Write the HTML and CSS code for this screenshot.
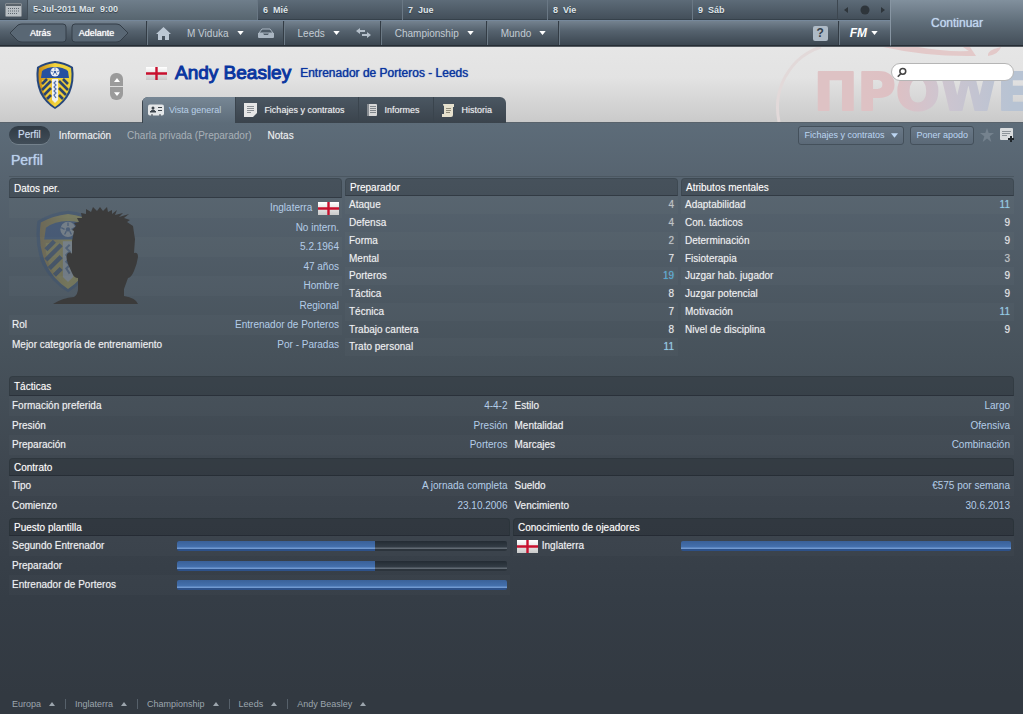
FILE: index.html
```html
<!DOCTYPE html>
<html lang="es">
<head>
    <meta charset="UTF-8">
    <title>Andy Beasley - Perfil</title>
    <link rel="stylesheet" href="styles.css">
</head>
<body>
<svg class="defs" width="0" height="0" aria-hidden="true">
    <defs>
        <linearGradient id="gold" x1="0" x2="1" y1="0" y2="0">
            <stop offset="0" stop-color="#c98a16"/>
            <stop offset="0.5" stop-color="#f3d43c"/>
            <stop offset="1" stop-color="#e8cf3a"/>
        </linearGradient>
        <linearGradient id="flag-shade" x1="0" x2="0" y1="0" y2="1">
            <stop offset="0" stop-color="#fff"/>
            <stop offset="1" stop-color="#c9c9c9"/>
        </linearGradient>
        <symbol id="crest" viewBox="0 0 40 50">
            <path d="M20 1 Q30 2 38 7 Q40 21 35 33 Q30 43 20 49 Q10 43 5 33 Q0 21 2 7 Q10 2 20 1Z" fill="#25467c"/>
            <path d="M20 3 Q29 4 36 8 Q38 21 33 32 Q29 41 20 47 Q11 41 7 32 Q2 21 4 8 Q11 4 20 3Z" fill="url(#gold)"/>
            <path d="M20 7 Q28 7 33 11 L34 18 H6 L7 11 Q12 7 20 7Z" fill="#2650a0"/>
            <path d="M7 20 L16 20 V42 Q6 33 7 20Z M33 20 L24 20 V42 Q34 33 33 20Z" fill="#f0ca38"/>
            <path d="M7 24 L12 19 M7 30 L16 21 M9 35 L16 28 M12 39 L16 35 M33 24 L28 19 M33 30 L24 21 M31 35 L24 28 M28 39 L24 35" stroke="#2b4470" stroke-width="2.6"/>
            <path d="M17 19 H23 V40 L20 43 L17 40Z" fill="#eef0f4"/>
            <path d="M21 21 L19 23 L21 25 L19 27 L21 29 L19 31 L21 33 L19 35 L21 38" fill="none" stroke="#5572ab" stroke-width="1.2"/>
            <circle cx="20" cy="12" r="4.500" fill="#eef0f4"/>
            <circle cx="20" cy="12" r="1.300" fill="#3c62a8"/>
            <path d="M20 8v2M16 11l2 1M24 11l-2 1M18 15l1-2M22 15l-1-2" stroke="#3c62a8" stroke-width="0.8"/>
        </symbol>
        <symbol id="flag" viewBox="0 0 21 13">
            <rect width="21" height="13" fill="url(#flag-shade)"/>
            <path d="M0 6.500H21M10.500 0V13" stroke="#c8102e" stroke-width="2.400"/>
        </symbol>
        <symbol id="caret" viewBox="0 0 8 5">
            <path d="M0 0H8L4 5Z" fill="currentColor"/>
        </symbol>
        <symbol id="caret-up" viewBox="0 0 6 4">
            <path d="M0 4H6L3 0Z" fill="currentColor"/>
        </symbol>
    </defs>
</svg>

<header class="topbar">
    <div class="dates">
        <button class="calendar" aria-label="Calendario">
            <svg width="17" height="14" viewBox="0 0 17 14">
                <rect x="0.500" y="0.500" width="16" height="13" rx="1" fill="#b9bfc4" stroke="#848b91"/>
                <rect x="1" y="1" width="15" height="2" fill="#5a636b"/>
                <path d="M3 5.500H15M3 8H15M3 10.500H13" stroke="#5c656d" stroke-dasharray="1 1"/>
            </svg>
        </button>
        <div class="day today">5-Jul-2011 Mar&nbsp; 9:00</div>
        <div class="day">6&nbsp; Mié</div>
        <div class="day">7&nbsp; Jue</div>
        <div class="day">8&nbsp; Vie</div>
        <div class="day">9&nbsp; Sáb</div>
        <div class="day-pager">
            <svg width="41" height="10" viewBox="0 0 41 10" fill="#2e353b">
                <path d="M0 5L4 2V8ZM41 5L37 2V8Z"/>
                <circle cx="21" cy="5" r="4.500"/>
            </svg>
        </div>
    </div>
    <nav class="menu">
        <div class="history">
            <button class="back">
                <svg width="58" height="20" viewBox="0 0 58 20"><path d="M1 10L9 2Q11 1 13 1H54Q57 1 57 4V16Q57 19 54 19H13Q11 19 9 18Z"/></svg>
                <span>Atrás</span>
            </button>
            <button class="forward">
                <svg width="58" height="20" viewBox="0 0 58 20"><path d="M57 10L49 2Q47 1 45 1H4Q1 1 1 4V16Q1 19 4 19H45Q47 19 49 18Z"/></svg>
                <span>Adelante</span>
            </button>
        </div>
        <div class="menu-group">
            <button aria-label="Inicio">
                <svg width="15" height="13" viewBox="0 0 15 13" fill="#bcc8d4"><path d="M7.500 0L15 7H13V13H9V9H6V13H2V7H0Z"/></svg>
            </button>
            <button class="menu-name">M Viduka <svg width="7" height="4"><use href="#caret"/></svg></button>
            <button aria-label="Bandeja">
                <svg width="16" height="10" viewBox="0 0 16 10"><path d="M4 1H12L15 5H1Z" fill="#4d5a66" stroke="#aab6c2"/><path d="M0 5H5L6 7H10L11 5H16V9Q16 10 15 10H1Q0 10 0 9Z" fill="#aab6c2"/></svg>
            </button>
        </div>
        <div class="menu-group">
            <button class="menu-club">Leeds <svg width="7" height="4"><use href="#caret"/></svg></button>
            <button aria-label="Cambiar">
                <svg width="15" height="10" viewBox="0 0 15 10" fill="#b4bfca"><path d="M0 3L4 0V2H9V4H4V6ZM15 7L11 4V6H6V8H11V10Z"/></svg>
            </button>
        </div>
        <div class="menu-group"><button>Championship <svg width="7" height="4"><use href="#caret"/></svg></button></div>
        <div class="menu-group"><button>Mundo <svg width="7" height="4"><use href="#caret"/></svg></button></div>
        <div class="menu-group spacer"><button class="help">?</button></div>
        <div class="menu-group"><button class="fm">FM <svg width="7" height="4"><use href="#caret"/></svg></button></div>
    </nav>
    <button class="continue">Continuar</button>
</header>

<section class="banner">
    <svg class="sponsor" width="250" height="75" viewBox="0 0 250 75" aria-hidden="true">
        <defs>
            <linearGradient id="sponsor-fill" gradientUnits="userSpaceOnUse" x1="90" x2="240" y1="0" y2="0">
                <stop offset="0" stop-color="#dec2c4"/>
                <stop offset="0.200" stop-color="#dec0c3"/>
                <stop offset="0.500" stop-color="#cfc5cf"/>
                <stop offset="1" stop-color="#b7c3d3"/>
            </linearGradient>
        </defs>
        <path d="M6 75Q-1 40 24 14Q35 4 48 0" fill="none" stroke="#e2d9d9" stroke-width="3"/>
        <path d="M110 0Q155 10 203 9L197 0H190Q194 3 196 4Q172 5 145 0Z" fill="#e3c9c9"/>
        <path d="M215 9Q214 5 221 2L228 0Q226 7 215 9Z" fill="#e3c9c9"/>
        <text x="41" y="63" fill="url(#sponsor-fill)" stroke="url(#sponsor-fill)" stroke-width="2" stroke-linejoin="round">ПPOWE</text>
    </svg>
    <svg class="crest" width="40" height="50"><use href="#crest"/></svg>
    <div class="stepper">
        <button aria-label="Anterior"><svg width="6" height="4"><use href="#caret-up"/></svg></button>
        <button aria-label="Siguiente"><svg width="6" height="4"><use href="#caret"/></svg></button>
    </div>
    <div class="identity">
        <div class="name-row">
            <svg width="21" height="13"><use href="#flag"/></svg>
            <h1>Andy Beasley</h1>
            <h2>Entrenador de Porteros - Leeds</h2>
        </div>
        <nav class="tabs">
            <a href="#" class="active">
                <svg width="16" height="13" viewBox="0 0 16 13"><rect y="0.500" width="16" height="11" rx="2" fill="#e3e6e8"/><circle cx="5" cy="4" r="1.500" fill="#3d454c"/><path d="M2 8Q5 4 8 8ZM10 3.500H14M10 6.500H14M3 11H5M11 11H13" stroke="#3d454c" fill="#3d454c"/></svg>
                Vista general
            </a>
            <a href="#">
                <svg width="13" height="14" viewBox="0 0 13 14"><path d="M0 0H13V10L9 14H0Z" fill="#e6e6e6"/><path d="M3 3.500H10M3 5.500H10M3 7.500H10M3 9.500H7" stroke="#8a8f94"/></svg>
                Fichajes y contratos
            </a>
            <a href="#">
                <svg width="10" height="12" viewBox="0 0 10 12"><rect width="10" height="12" rx="1" fill="#d8d8d8"/><path d="M0 0H2V12H0Z" fill="#888d92"/><path d="M3 2.500H9M3 4.500H9M3 6.500H9M3 8.500H9" stroke="#80868b"/></svg>
                Informes
            </a>
            <a href="#">
                <svg width="12" height="13" viewBox="0 0 12 13"><path d="M1 0H12V3H11V11Q11 13 9 13H0V10H2V2Q1 2 1 0Z" fill="#e6e1cd"/><path d="M4 4.500H9M4 6.500H9M4 8.500H8" stroke="#8f8b79"/></svg>
                Historia
            </a>
        </nav>
    </div>
    <label class="search">
        <svg width="13" height="13" viewBox="0 0 13 13" fill="none" stroke="#444" stroke-width="2"><circle cx="7.500" cy="5" r="3.800"/><path d="M5 8L1 12"/></svg>
        <input type="search" aria-label="Buscar">
    </label>
</section>

<main>
    <div class="subnav">
        <a href="#" class="active">Perfil</a>
        <a href="#">Información</a>
        <a href="#" class="disabled">Charla privada (Preparador)</a>
        <a href="#">Notas</a>
        <div class="actions">
            <button class="action">Fichajes y contratos <svg width="7" height="5"><use href="#caret"/></svg></button>
            <button class="action">Poner apodo</button>
            <button aria-label="Favorito">
                <svg width="14" height="14" viewBox="0 0 14 14" fill="#75828e"><path d="M7 0L8.700 5H14L9.700 8.300L11.300 14L7 10.500L2.700 14L4.300 8.300L0 5H5.300Z"/></svg>
            </button>
            <button aria-label="Añadir nota">
                <svg width="14" height="14" viewBox="0 0 14 14"><rect width="13" height="12" rx="1" fill="#d9dcde"/><path d="M2 3.500H11M2 5.500H10M2 7.500H7" stroke="#8d949a"/><path d="M11 8V14M8 11H14" stroke="#20262b" stroke-width="2"/></svg>
            </button>
        </div>
    </div>
    <h3 class="title">Perfil</h3>

    <div class="columns thirds">
        <section class="personal">
            <h4 class="tall">Datos per.</h4>
            <svg class="portrait" width="108" height="100" viewBox="0 0 108 100" role="img" aria-label="Sin foto">
                <svg x="0" y="3" width="70" height="85" opacity="0.220"><use href="#crest"/></svg>
                <path d="M20 98Q29 92 41 91Q45 88 45 83V72Q41 72 39 67L35 58Q32 50 35 47Q38 45 39 48L39 35L41 25L39 24L43 20L41 17L46 16L44 12L49 12L48 7L53 8L53 3L58 6L60 1L64 5L67 1L70 5L74 1L75 6L79 4L79 8L84 4L82 9L90 7L86 11L96 8L91 12L97 14L94 16L100 20L101 27L102 33L101 47Q105 46 105 51Q104 58 101 65Q98 72 95 72L91 83V90Q103 92 105 98Z" fill="#3b3b3b"/>
            </svg>
            <table>
                <tr><th></th><td>Inglaterra <svg width="21" height="13"><use href="#flag"/></svg></td></tr>
                <tr><th></th><td>No intern.</td></tr>
                <tr><th></th><td>5.2.1964</td></tr>
                <tr><th></th><td>47 años</td></tr>
                <tr><th></th><td>Hombre</td></tr>
                <tr><th></th><td>Regional</td></tr>
                <tr><th>Rol</th><td>Entrenador de Porteros</td></tr>
                <tr><th>Mejor categoría de entrenamiento</th><td>Por - Paradas</td></tr>
            </table>
        </section>
        <section>
            <h4>Preparador</h4>
            <table class="attributes">
                <tr><th>Ataque</th><td class="low">4</td></tr>
                <tr><th>Defensa</th><td class="low">4</td></tr>
                <tr><th>Forma</th><td class="low">2</td></tr>
                <tr><th>Mental</th><td>7</td></tr>
                <tr><th>Porteros</th><td class="top">19</td></tr>
                <tr><th>Táctica</th><td>8</td></tr>
                <tr><th>Técnica</th><td>7</td></tr>
                <tr><th>Trabajo cantera</th><td>8</td></tr>
                <tr><th>Trato personal</th><td class="good">11</td></tr>
            </table>
        </section>
        <section>
            <h4>Atributos mentales</h4>
            <table class="attributes">
                <tr><th>Adaptabilidad</th><td class="good">11</td></tr>
                <tr><th>Con. tácticos</th><td>9</td></tr>
                <tr><th>Determinación</th><td>9</td></tr>
                <tr><th>Fisioterapia</th><td class="low">3</td></tr>
                <tr><th>Juzgar hab. jugador</th><td>9</td></tr>
                <tr><th>Juzgar potencial</th><td>9</td></tr>
                <tr><th>Motivación</th><td class="good">11</td></tr>
                <tr><th>Nivel de disciplina</th><td>9</td></tr>
            </table>
        </section>
    </div>

    <section class="tactics">
        <h4 class="tall">Tácticas</h4>
        <table class="pairs">
            <tr><th>Formación preferida</th><td>4-4-2</td><th>Estilo</th><td>Largo</td></tr>
            <tr><th>Presión</th><td>Presión</td><th>Mentalidad</th><td>Ofensiva</td></tr>
            <tr><th>Preparación</th><td>Porteros</td><th>Marcajes</th><td>Combinación</td></tr>
        </table>
    </section>

    <section>
        <h4>Contrato</h4>
        <table class="pairs">
            <tr><th>Tipo</th><td>A jornada completa</td><th>Sueldo</th><td>€575 por semana</td></tr>
            <tr><th>Comienzo</th><td>23.10.2006</td><th>Vencimiento</th><td>30.6.2013</td></tr>
        </table>
    </section>

    <div class="columns halves">
        <section>
            <h4>Puesto plantilla</h4>
            <table class="levels">
                <tr><th>Segundo Entrenador</th><td><div class="bar"><div style="width: 60%"></div></div></td></tr>
                <tr><th>Preparador</th><td><div class="bar"><div style="width: 60%"></div></div></td></tr>
                <tr><th>Entrenador de Porteros</th><td><div class="bar"><div style="width: 100%"></div></div></td></tr>
            </table>
        </section>
        <section>
            <h4>Conocimiento de ojeadores</h4>
            <table class="levels">
                <tr><th><svg width="21" height="13"><use href="#flag"/></svg> Inglaterra</th><td><div class="bar"><div style="width: 100%"></div></div></td></tr>
            </table>
        </section>
    </div>
</main>

<footer>
    <button>Europa <svg width="6" height="4"><use href="#caret-up"/></svg></button>
    <button>Inglaterra <svg width="6" height="4"><use href="#caret-up"/></svg></button>
    <button>Championship <svg width="6" height="4"><use href="#caret-up"/></svg></button>
    <button>Leeds <svg width="6" height="4"><use href="#caret-up"/></svg></button>
    <button>Andy Beasley <svg width="6" height="4"><use href="#caret-up"/></svg></button>
</footer>
</body>
</html>
```
FILE: styles.css
```css
* {
    box-sizing: border-box;
}

body {
    margin: 0;
    min-height: 100vh;
    display: flex;
    flex-flow: column nowrap;
    font-family: "Liberation Sans", Arial, sans-serif;
    font-size: 10px;
    color: #eef1f4;
    background: #343c45;
}

h1, h2, h3, h4 {
    margin: 0;
    font-weight: normal;
}

a {
    color: inherit;
    text-decoration: none;
}

button {
    margin: 0;
    padding: 0;
    border: 0;
    background: none;
    font: inherit;
    color: inherit;
    display: flex;
    align-items: center;
}

.defs {
    position: absolute;
}

/* top bar */

.topbar {
    display: grid;
    grid-template-columns: 1fr 133px;
    grid-template-rows: 20px 26px;
    border-bottom: 1px solid #555b61;
    text-shadow: 0 1px 1px #333c45;
}

.dates {
    display: grid;
    grid-template-columns: 27px 230px repeat(4, 1fr) 53px;
    background: linear-gradient(#5d6b78, #434f5a);
    border-bottom: 1px solid #36414b;
    font-size: 9px;
    font-weight: bold;
    color: #dfe4e9;
}

.calendar {
    justify-content: center;
}

.day {
    padding-left: 5px;
    line-height: 20px;
    border-left: 1px solid #6a7885;
}

.today {
    line-height: 19px;
    background: linear-gradient(#6f7e8b, #57656f);
    border-color: #424d57;
}

.day-pager {
    display: flex;
    align-items: center;
    justify-content: center;
    border-left: 1px solid #3d4750;
}

.menu {
    display: flex;
    background: linear-gradient(#74828f, #56636f 40%, #3b4650);
    border-top: 1px solid #76889b;
    border-bottom: 1px solid #262d34;
    color: #c3ccd4;
}

.history {
    width: 146px;
    padding-left: 9px;
    display: flex;
    align-items: center;
    gap: 4px;
    font-size: 9px;
    color: #fff;
}

.history button {
    display: grid;
    align-items: center;
    justify-items: center;
}

.history svg, .history span {
    grid-area: 1 / 1;
}

.history path {
    fill: #596774;
    stroke: #343e48;
    stroke-width: 1px;
}

.history span {
    text-shadow: 0 0 1px #fff;
}

.back span {
    padding-left: 5px;
}

.forward span {
    padding-right: 7px;
}

.menu-group {
    display: flex;
    align-items: center;
    padding: 0 12px 0 14px;
    border-left: 1px solid #333c45;
    box-shadow: inset 1px 0 #6b7985;
}

.menu-group:nth-child(2) {
    padding: 0 9px;
}

.menu-group:nth-child(3) {
    padding-right: 9px;
}

.menu-group:last-child {
    padding: 0 12px 0 11px;
}

.menu-group button {
    gap: 8px;
}

.menu-group button > svg[height="4"] {
    color: #fff;
}

.menu-name {
    margin: 0 14px 0 16px;
}

.menu-club {
    margin-right: 16px;
}

.spacer {
    flex: 1 1 auto;
    justify-content: flex-end;
    padding-right: 10px;
}

.menu-group .help {
    width: 15px;
    height: 15px;
    justify-content: center;
    border-radius: 2px;
    background: #aebac6;
    color: #34404b;
    font-size: 12px;
    font-weight: bold;
    text-shadow: none;
}

.menu-group .fm {
    gap: 4px;
    font-size: 12px;
    font-weight: bold;
    font-style: italic;
    color: #fff;
}

.continue {
    grid-area: 1 / 2 / 3 / 3;
    justify-content: center;
    font-size: 12px;
    color: #c0d6ef;
    background: linear-gradient(#81909d, #5f6d79 50%, #444f59);
    border-left: 1px solid #8795a2;
    border-bottom: 1px solid #262d34;
    text-shadow: 0 0 1px #c0d6ef;
}

/* banner */

.banner {
    position: relative;
    display: flex;
    align-items: flex-start;
    height: 76px;
    background: linear-gradient(#e6e6e6, #e3e3e3 40%, #cacaca);
    border-bottom: 1px solid #59636c;
}

.sponsor {
    position: absolute;
    right: 0;
    top: 0;
    font: bold 52px "DejaVu Sans", sans-serif;
}

.crest {
    margin: 13px 0 0 35px;
}

.stepper {
    display: flex;
    flex-flow: column nowrap;
    gap: 1px;
    margin: 26px 19px 0 35px;
}

.stepper button {
    width: 13px;
    height: 13px;
    justify-content: center;
    background: #9b9b9b;
    color: #fff;
    border-radius: 6px 6px 0 0;
}

.stepper button:last-child {
    border-radius: 0 0 6px 6px;
}

.identity {
    height: 76px;
    display: flex;
    flex-flow: column nowrap;
}

.name-row {
    flex: 1 1 auto;
    display: flex;
    align-items: center;
    padding: 2px 0 0 4px;
    color: #0a35a0;
}

.name-row h1 {
    margin: 0 9px 0 8px;
    font-size: 19px;
    -webkit-text-stroke: 1px #0a35a0;
}

.name-row h2 {
    font-size: 12px;
    text-shadow: 0 0 1px #0a35a0;
}

.tabs {
    display: flex;
    align-self: flex-start;
    border-radius: 6px 6px 0 0;
    overflow: hidden;
    background: linear-gradient(#4b5762, #3a434c);
    font-size: 9px;
}

.tabs a {
    display: flex;
    align-items: center;
    gap: 7px;
    height: 26px;
    padding: 0 14px 0 8px;
    border-left: 1px solid #3a444d;
    text-shadow: 0 0 1px #999;
}

.tabs a.active {
    gap: 5px;
    padding-left: 5px;
    background: linear-gradient(#778795, #5d6c79);
    color: #b9d0e8;
    text-shadow: none;
}

.search {
    position: relative;
    width: 123px;
    height: 18px;
    margin: 16px 9px 0 auto;
    padding-left: 5px;
    display: flex;
    align-items: center;
    background: #fff;
    border: 1px solid #b5b5b5;
    border-radius: 9px;
}

.search input {
    flex: 1 1 auto;
    min-width: 0;
    border: 0;
    outline: 0;
    background: none;
    font: inherit;
}

/* profile */

main {
    flex: 1 1 auto;
    padding: 0 9px;
    background: linear-gradient(#5d6c79, #56636f 60px, #47525b 232px, #3c444d 370px, #353d46 475px, #323941);
}

.subnav {
    display: flex;
    align-items: center;
    height: 24px;
}

.subnav > a {
    margin-right: 16px;
    text-shadow: 0 0 1px #999;
}

.subnav > a.active {
    height: 18px;
    line-height: 17px;
    margin-right: 9px;
    padding: 0 9px;
    border-radius: 9px;
    background: linear-gradient(#303b45, #414d58);
    box-shadow: 0 1px #74818c;
    color: #c4d9f0;
}

.subnav > a.disabled {
    color: #a9b1b8;
    text-shadow: none;
}

.actions {
    display: flex;
    align-items: center;
    gap: 6px;
    margin-left: auto;
}

.action {
    height: 19px;
    gap: 7px;
    padding: 0 5px;
    font-size: 9px;
    color: #bcd6f2;
    border: 1px solid #44505b;
    border-radius: 3px;
    background: linear-gradient(#6a7988, #5b6977);
}

.title {
    height: 30px;
    padding: 4px 0 0 2px;
    margin-bottom: 1px;
    font-size: 14px;
    line-height: 18px;
    color: #b9d0ec;
    text-shadow: 0 0 1px #b9d0ec;
    border-bottom: 1px solid #4b5761;
}

.columns {
    display: grid;
    gap: 3px;
}

.thirds {
    grid-template-columns: repeat(3, 1fr);
}

.halves {
    grid-template-columns: repeat(2, 1fr);
}

h4 {
    height: 18px;
    padding-left: 4px;
    line-height: 17px;
    color: #fff;
    background: rgba(20, 24, 28, 0.24);
    border: 1px solid rgba(20, 28, 36, 0.15);
    border-bottom-color: rgba(20, 28, 36, 0.4);
    border-radius: 4px 4px 0 0;
    text-shadow: 0 0 1px #888;
}

h4.tall {
    height: 20px;
    line-height: 19px;
}

table {
    width: 100%;
    table-layout: fixed;
    border-collapse: collapse;
}

tr {
    height: 19px;
}

tr:nth-child(odd) {
    height: 20px;
    background: rgba(255, 255, 255, 0.02);
}

.attributes tr {
    height: 18px;
}

.attributes tr:nth-child(4n) {
    height: 17px;
}

th, td {
    padding: 0 3px;
    line-height: 14px;
    vertical-align: middle;
}

th {
    text-align: left;
    font-weight: normal;
    text-shadow: 0 0 1px #999;
}

td {
    text-align: right;
    color: #b4cde8;
}

td svg, th svg {
    vertical-align: middle;
}

.personal {
    position: relative;
}

.personal th {
    width: 60%;
}

.personal td svg {
    margin-left: 3px;
}

.portrait {
    position: absolute;
    top: 28px;
    left: 24px;
}

.attributes th {
    padding-left: 4px;
}

.attributes td {
    width: 40px;
    padding-right: 4px;
    color: #e6e9ec;
    text-shadow: 0 0 1px #999;
}

.attributes td.low {
    color: #bfc4c8;
}

.attributes td.good {
    color: #8ccbea;
}

.attributes td.top {
    color: #4ba9d8;
}

.tactics {
    margin: 20px 0 3px;
}

.pairs {
    margin-bottom: 3px;
}

.pairs td {
    padding-right: 4px;
}

.levels th {
    width: 33%;
}

.levels th svg {
    margin: 0 1px;
}

.bar {
    height: 10px;
    border-radius: 2px;
    overflow: hidden;
    background: linear-gradient(#242c34, #333c45 60%, #616a73 70%, #616a73 80%, #2c343c 80%);
}

.bar div {
    height: 10px;
    background: linear-gradient(#3a6199, #4470ad 60%, #7199d0 70%, #7199d0 80%, #2d5189 80%);
}

/* breadcrumbs */

footer {
    display: flex;
    align-items: center;
    height: 20px;
    padding-left: 12px;
    background: #323941;
    font-size: 9px;
    color: #9ca5ad;
}

footer button {
    gap: 8px;
    padding-right: 10px;
    margin-right: 9px;
    border-right: 1px solid #56606a;
}

footer button:last-child {
    border-right: 0;
}
```
